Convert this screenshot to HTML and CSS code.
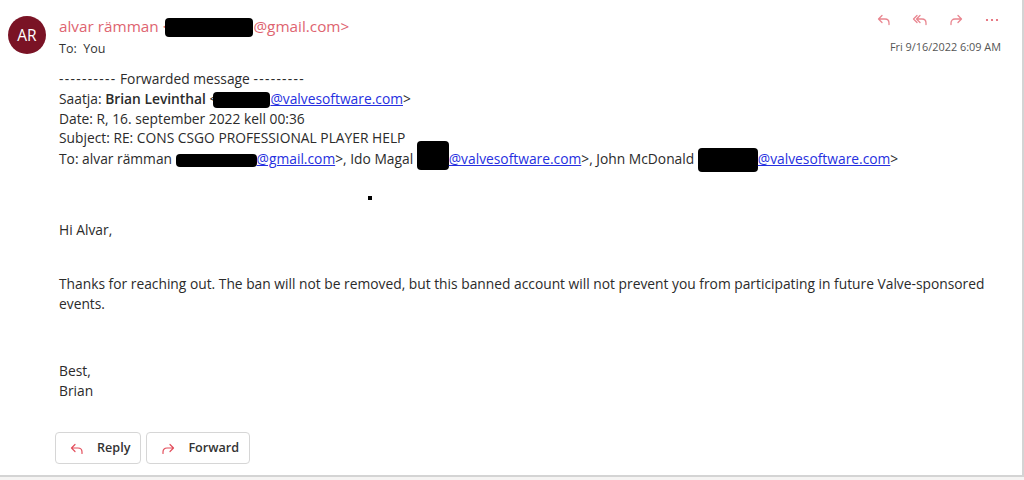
FILE: index.html
```html
<!DOCTYPE html>
<html lang="en">
<head>
<meta charset="utf-8">
<title>Mail</title>
<link rel="stylesheet" href="styles.css">
</head>
<body>
<div class="card">
  <header class="head">
    <div class="avatar">AR</div>
    <div class="who">
      <div class="from">alvar rämman &lt;<span class="redact r-from"></span>@gmail.com&gt;</div>
      <div class="to">To:&nbsp; You</div>
    </div>
    <div class="meta">
      <div class="actions">
        <svg class="ico" viewBox="0 0 16 16"><path d="M6 4.5 L2.5 8 L6 11.5 M2.5 8 H9 C11.5 8 13 9.6 13 12 V13.5"/></svg>
        <svg class="ico" viewBox="0 0 16 16"><path d="M5 4.5 L1.5 8 L5 11.5 M8 4.5 L4.5 8 L8 11.5 M4.5 8 H10 C12.5 8 14 9.6 14 12 V13.5"/></svg>
        <svg class="ico" viewBox="0 0 16 16"><path d="M10 4.5 L13.5 8 L10 11.5 M13.5 8 H7 C4.5 8 3 9.6 3 12 V13.5"/></svg>
        <svg class="ico dots" viewBox="0 0 16 16"><circle cx="3" cy="9" r="1.1"/><circle cx="8" cy="9" r="1.1"/><circle cx="13" cy="9" r="1.1"/></svg>
      </div>
      <div class="date">Fri 9/16/2022 6:09 AM</div>
    </div>
  </header>

  <div class="body">
    <div class="fwd">
      <div><span class="dash">----------</span> Forwarded message <span class="dash">---------</span></div>
      <div>Saatja: <b>Brian Levinthal</b> &lt;<span class="redact r-saatja"></span><a href="#">@valvesoftware.com</a>&gt;</div>
      <div>Date: R, 16. september 2022 kell 00:36</div>
      <div>Subject: RE: CONS CSGO PROFESSIONAL PLAYER HELP</div>
      <div>To: alvar rämman <span class="redact r-to1"></span><a href="#">@gmail.com</a>&gt;, Ido Magal <span class="redact r-to2"></span><a href="#">@valvesoftware.com</a>&gt;, John McDonald <span class="redact r-to3"></span><a href="#">@valvesoftware.com</a>&gt;</div>
    </div>
    <div class="dotline"><span class="dot"></span></div>
    <p class="p-hi">Hi Alvar,</p>
    <p class="p-main">Thanks for reaching out. The ban will not be removed, but this banned account will not prevent you from participating in future Valve-sponsored events.</p>
    <p class="p-sign">Best,<br>Brian</p>
    <div class="buttons">
      <button class="btn"><svg class="bico" viewBox="0 0 16 16"><path d="M6 4.5 L2.5 8 L6 11.5 M2.5 8 H9 C11.5 8 13 9.6 13 12 V13.5"/></svg>Reply</button>
      <button class="btn"><svg class="bico" viewBox="0 0 16 16"><path d="M10 4.5 L13.5 8 L10 11.5 M13.5 8 H7 C4.5 8 3 9.6 3 12 V13.5"/></svg>Forward</button>
    </div>
  </div>
</div>
</body>
</html>
```

FILE: styles.css
```css
html, body {
  margin: 0;
  padding: 0;
}
body {
  background: #f5f4f3;
  font-family: "Open Sans", "Noto Sans", "Liberation Sans", sans-serif;
  color: #2b2b2b;
}
.card {
  background: #fff;
  width: 1022px;
  height: 475px;
  border-right: 2px solid #d4d4d4;
  border-bottom: 2px solid #d4d4d4;
  box-sizing: content-box;
}
.head {
  display: flex;
  align-items: flex-start;
  padding: 16px 0 0 8px;
  height: 53px;
  box-sizing: border-box;
}
.avatar {
  width: 38px;
  height: 38px;
  border-radius: 50%;
  background: #7a1325;
  color: #fff;
  font-size: 15.5px;
  display: flex;
  align-items: center;
  justify-content: center;
  flex: none;
}
.who {
  margin-left: 13px;
  flex: 1;
}
.from {
  font-size: 15.3px;
  line-height: 20px;
  color: #de6470;
}
.to {
  font-size: 12.5px;
  line-height: 20px;
  margin-top: 2px;
  color: #333;
}
.meta {
  display: flex;
  flex-direction: column;
  align-items: flex-end;
  margin-top: -5px;
  padding-right: 22px;
}
.actions {
  display: flex;
  gap: 20px;
  height: 18px;
}
.ico {
  width: 16px;
  height: 16px;
  fill: none;
  stroke: #e98690;
  stroke-width: 1.3;
  stroke-linecap: round;
  stroke-linejoin: round;
}
.ico.dots {
  fill: #e25b68;
  stroke: none;
}
.date {
  font-size: 10.9px;
  color: #555;
  margin-top: 10px;
  margin-right: -1px;
  line-height: 16px;
}
.redact {
  display: inline-block;
  background: #000;
  border-radius: 4px;
  vertical-align: middle;
}
.r-from { width: 88px; height: 19px; margin-left: -6px; }
.r-saatja { width: 57px; height: 16px; margin-left: -4px; }
.r-to1 { width: 81px; height: 13px; }
.r-to2 { width: 32px; height: 29px; margin-top: -10px; }
.r-to3 { width: 60px; height: 24px; }
.body {
  padding: 0 30px 0 59px;
  font-size: 13.8px;
  line-height: 19.75px;
  color: #2b2b2b;
}
.fwd {
  margin-top: 16px;
}
.dash {
  letter-spacing: 1.3px;
}
.fwd b {
  font-weight: 600;
}
a {
  color: #2630e0;
  text-decoration: underline;
}
.dotline {
  margin-top: 24px;
  height: 4px;
  padding-left: 309px;
}
.dot {
  display: block;
  width: 4px;
  height: 4px;
  background: #000;
}
p { margin: 0; }
.p-hi { margin-top: 20px; }
.p-main { margin-top: 34px; width: 935px; }
.p-sign { margin-top: 48px; }
.buttons {
  display: flex;
  gap: 5px;
  margin-top: 31px;
  margin-left: -4px;
}
.btn {
  display: flex;
  align-items: center;
  height: 32px;
  padding: 0 10px 0 13px;
  background: #fff;
  border: 1px solid #d6d6d6;
  border-radius: 4px;
  font-family: "Open Sans", "Noto Sans", sans-serif;
  font-size: 12.6px;
  font-weight: 600;
  color: #333;
}
.bico {
  width: 16px;
  height: 16px;
  margin-right: 12px;
  fill: none;
  stroke: #e34f5d;
  stroke-width: 1.2;
  stroke-linecap: round;
  stroke-linejoin: round;
}
```
